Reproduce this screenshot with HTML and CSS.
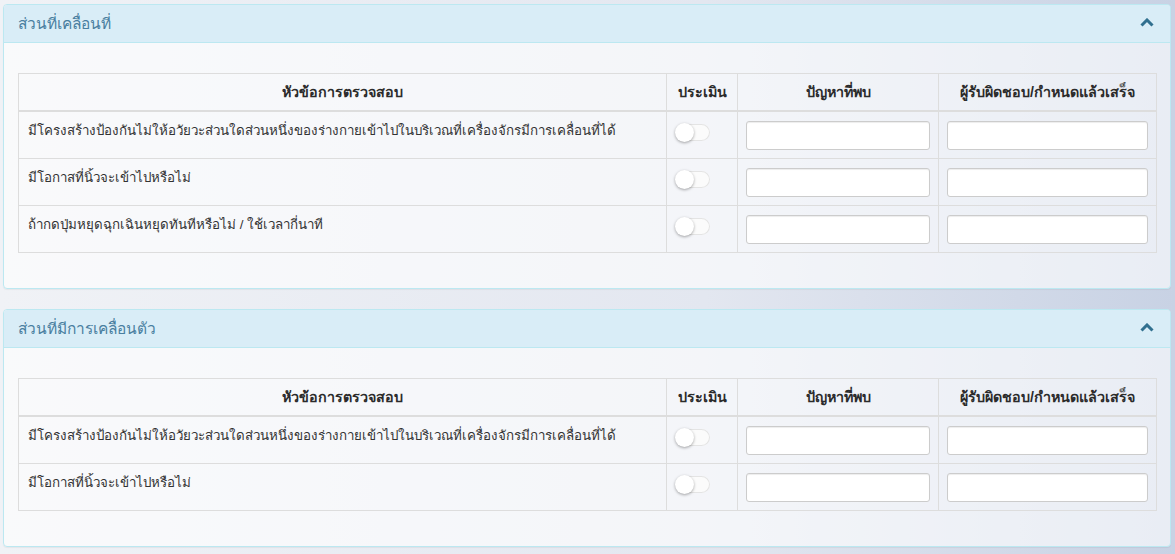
FILE: index.html
```html
<!DOCTYPE html>
<html lang="th">
<head>
<meta charset="utf-8">
<link rel="stylesheet" href="styles.css">
</head>
<body>
<div class="page">
  <section class="panel">
    <div class="panel-heading">
      <span class="panel-title">ส่วนที่เคลื่อนที่</span>
      <svg class="chev" width="14" height="9" viewBox="0 0 14 9"><path d="M1.5 7.5 L7 2 L12.5 7.5" fill="none" stroke="#31708f" stroke-width="3"/></svg>
    </div>
    <div class="panel-body">
      <table class="tbl">
        <thead>
          <tr>
            <th class="c1">หัวข้อการตรวจสอบ</th>
            <th class="c2">ประเมิน</th>
            <th class="c3">ปัญหาที่พบ</th>
            <th class="c4">ผู้รับผิดชอบ/กำหนดแล้วเสร็จ</th>
          </tr>
        </thead>
        <tbody>
          <tr>
            <td>มีโครงสร้างป้องกันไม่ให้อวัยวะส่วนใดส่วนหนึ่งของร่างกายเข้าไปในบริเวณที่เครื่องจักรมีการเคลื่อนที่ได้</td>
            <td><span class="toggle"><span class="knob"></span></span></td>
            <td><input class="inp" type="text"></td>
            <td><input class="inp" type="text"></td>
          </tr>
          <tr>
            <td>มีโอกาสที่นิ้วจะเข้าไปหรือไม่</td>
            <td><span class="toggle"><span class="knob"></span></span></td>
            <td><input class="inp" type="text"></td>
            <td><input class="inp" type="text"></td>
          </tr>
          <tr>
            <td>ถ้ากดปุ่มหยุดฉุกเฉินหยุดทันทีหรือไม่ / ใช้เวลากี่นาที</td>
            <td><span class="toggle"><span class="knob"></span></span></td>
            <td><input class="inp" type="text"></td>
            <td><input class="inp" type="text"></td>
          </tr>
        </tbody>
      </table>
    </div>
  </section>
  <section class="panel">
    <div class="panel-heading">
      <span class="panel-title">ส่วนที่มีการเคลื่อนตัว</span>
      <svg class="chev" width="14" height="9" viewBox="0 0 14 9"><path d="M1.5 7.5 L7 2 L12.5 7.5" fill="none" stroke="#31708f" stroke-width="3"/></svg>
    </div>
    <div class="panel-body">
      <table class="tbl">
        <thead>
          <tr>
            <th class="c1">หัวข้อการตรวจสอบ</th>
            <th class="c2">ประเมิน</th>
            <th class="c3">ปัญหาที่พบ</th>
            <th class="c4">ผู้รับผิดชอบ/กำหนดแล้วเสร็จ</th>
          </tr>
        </thead>
        <tbody>
          <tr>
            <td>มีโครงสร้างป้องกันไม่ให้อวัยวะส่วนใดส่วนหนึ่งของร่างกายเข้าไปในบริเวณที่เครื่องจักรมีการเคลื่อนที่ได้</td>
            <td><span class="toggle"><span class="knob"></span></span></td>
            <td><input class="inp" type="text"></td>
            <td><input class="inp" type="text"></td>
          </tr>
          <tr>
            <td>มีโอกาสที่นิ้วจะเข้าไปหรือไม่</td>
            <td><span class="toggle"><span class="knob"></span></span></td>
            <td><input class="inp" type="text"></td>
            <td><input class="inp" type="text"></td>
          </tr>
        </tbody>
      </table>
    </div>
  </section>
</div>
</body>
</html>
```
FILE: styles.css
```css
html, body {
  margin: 0;
  padding: 0;
}
body {
  font-family: "Liberation Sans", Tahoma, sans-serif;
  font-size: 13.35px;
  color: #333;
  background: linear-gradient(to right, #f0f2f6 0%, #e3e7f0 60%, #c8d2e4 100%);
  min-height: 554px;
}
.page {
  padding: 4px 4px 0 3px;
  display: flex;
  flex-direction: column;
  gap: 20px;
}
.panel {
  border: 1px solid #bce8f1;
  border-radius: 4px;
  background: rgba(255, 255, 255, 0.6);
  box-shadow: 0 1px 1px rgba(0, 0, 0, 0.05);
}
.panel-heading {
  background: #d9edf7;
  border-bottom: 1px solid #bce8f1;
  border-radius: 3px 3px 0 0;
  height: 37px;
  padding: 0 16px 0 14px;
  display: flex;
  align-items: center;
  justify-content: space-between;
}
.panel-title {
  font-size: 15.5px;
  color: #4a7fa0;
}
.chev {
  display: block;
  margin-top: -2px;
}
.panel-body {
  padding: 30px 14px 35px 14px;
}
.tbl {
  width: 100%;
  border-collapse: collapse;
  table-layout: fixed;
}
.tbl th, .tbl td {
  box-sizing: border-box;
  border: 1px solid #dddddd;
  padding: 8px;
  vertical-align: top;
  text-align: left;
  line-height: 20px;
}
.tbl th {
  font-weight: bold;
  font-size: 14.3px;
  color: #2b2b2b;
  text-align: center;
  border-bottom: 2px solid #dddddd;
  padding: 8px;
}
.c1 { width: 648px; }
.c2 { width: 71px; }
.c3 { width: 201px; }
.c4 { width: 218px; }
.tbl td:first-child {
  padding-left: 9px;
  padding-top: 9px;
}
.toggle {
  display: block;
  position: relative;
  width: 34px;
  height: 17px;
  margin: 4px 0 0 1px;
  border-radius: 9px;
  background: #fbfbfb;
  box-shadow: inset 0 0 0 1px #e4e4e4;
}
.knob {
  position: absolute;
  left: -1px;
  top: -1px;
  width: 19px;
  height: 19px;
  border-radius: 50%;
  background: #ffffff;
  box-shadow: 0 1px 3px rgba(0, 0, 0, 0.35);
}
.inp {
  display: block;
  box-sizing: border-box;
  width: 100%;
  height: 29px;
  margin: 1px 0 0;
  border: 1px solid #cccccc;
  border-radius: 3px;
  background: #ffffff;
  box-shadow: inset 0 1px 1px rgba(0, 0, 0, 0.075);
  font: inherit;
}
```
